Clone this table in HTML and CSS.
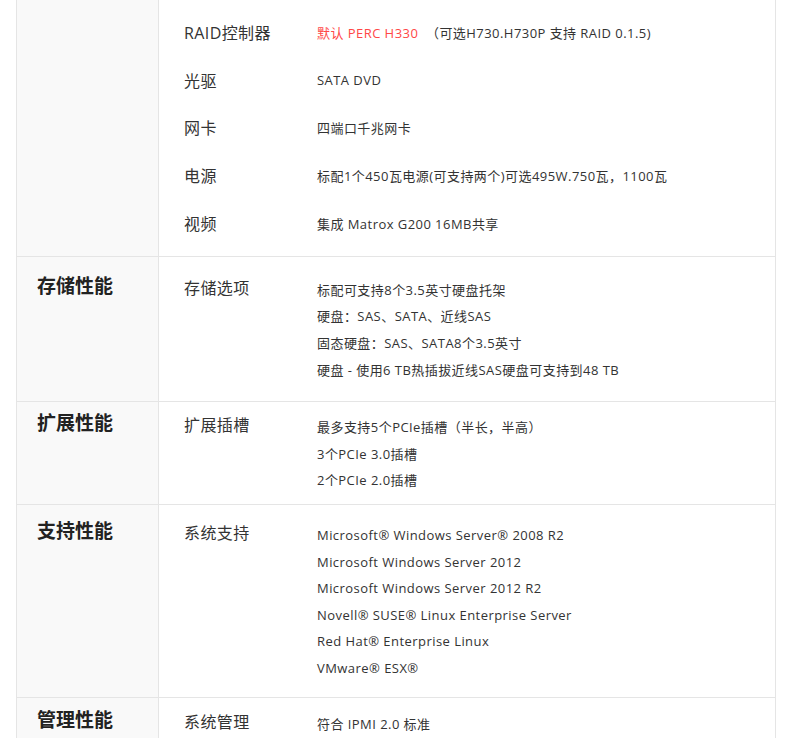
FILE: index.html
```html
<!DOCTYPE html>
<html lang="zh-CN">
<head>
  <meta charset="UTF-8">
  <meta name="viewport" content="width=device-width, initial-scale=1.0">
  <title>规格参数</title>
  <link rel="stylesheet" href="styles.css">
</head>
<body>
  <div class="spec">

    <div class="section first">
      <div class="cat"></div>
      <div class="items">
        <div class="item">
          <div class="label">RAID控制器</div>
          <div class="value"><span class="red">默认 PERC H330</span>&nbsp; （可选H730.H730P 支持 RAID 0.1.5)</div>
        </div>
        <div class="item">
          <div class="label">光驱</div>
          <div class="value">SATA DVD</div>
        </div>
        <div class="item">
          <div class="label">网卡</div>
          <div class="value">四端口千兆网卡</div>
        </div>
        <div class="item">
          <div class="label">电源</div>
          <div class="value">标配1个450瓦电源(可支持两个)可选495W.750瓦，1100瓦</div>
        </div>
        <div class="item">
          <div class="label">视频</div>
          <div class="value">集成 Matrox G200 16MB共享</div>
        </div>
      </div>
    </div>

    <div class="section storage">
      <div class="cat">存储性能</div>
      <div class="items">
        <div class="item">
          <div class="label">存储选项</div>
          <div class="value">
            <p>标配可支持8个3.5英寸硬盘托架</p>
            <p>硬盘：SAS、SATA、近线SAS</p>
            <p>固态硬盘：SAS、SATA8个3.5英寸</p>
            <p>硬盘 - 使用6 TB热插拔近线SAS硬盘可支持到48 TB</p>
          </div>
        </div>
      </div>
    </div>

    <div class="section expand">
      <div class="cat">扩展性能</div>
      <div class="items">
        <div class="item">
          <div class="label">扩展插槽</div>
          <div class="value">
            <p>最多支持5个PCIe插槽（半长，半高）</p>
            <p>3个PCIe 3.0插槽</p>
            <p>2个PCIe 2.0插槽</p>
          </div>
        </div>
      </div>
    </div>

    <div class="section os">
      <div class="cat">支持性能</div>
      <div class="items">
        <div class="item">
          <div class="label">系统支持</div>
          <div class="value">
            <p>Microsoft® Windows Server® 2008 R2</p>
            <p>Microsoft Windows Server 2012</p>
            <p>Microsoft Windows Server 2012 R2</p>
            <p>Novell® SUSE® Linux Enterprise Server</p>
            <p>Red Hat® Enterprise Linux</p>
            <p>VMware® ESX®</p>
          </div>
        </div>
      </div>
    </div>

    <div class="section mgmt">
      <div class="cat">管理性能</div>
      <div class="items">
        <div class="item">
          <div class="label">系统管理</div>
          <div class="value">
            <p>符合 IPMI 2.0 标准</p>
          </div>
        </div>
      </div>
    </div>

  </div>
</body>
</html>
```

FILE: styles.css
```css
body {
  font-family: "Open Sans", "Noto Sans CJK SC", sans-serif;
  margin: 0;
  background: #fff;
  color: #333;
}
.spec {
  width: 760px;
  margin: 0 0 0 16px;
  border-left: 1px solid #e5e5e5;
  border-right: 1px solid #e5e5e5;
  box-sizing: border-box;
}
.section {
  --pad: 12px;
  --pad-bottom: var(--pad);
  display: grid;
  grid-template-columns: 142px 1fr;
  border-bottom: 1px solid #e5e5e5;
}
.storage { --pad: 19px; --pad-bottom: 18px; }
.expand { --pad: 11px; --pad-bottom: 10px; }
.os { --pad: 16px; }
.mgmt { --pad: 12px; }

.cat {
  background: #f9f9f9;
  border-right: 1px solid #e5e5e5;
  padding: calc(var(--pad) - 2px) 20px 0;
  font-size: 19px;
  font-weight: bold;
  line-height: 24px;
  color: #222;
}
.items {
  padding: var(--pad) 0 var(--pad-bottom) 25px;
}
.item {
  display: flex;
  align-items: flex-start;
}
.label {
  width: 133px;
  flex-shrink: 0;
  font-size: 16px;
  line-height: 24px;
  letter-spacing: 0.4px;
}
.value {
  font-size: 13px;
  line-height: 26.6px;
  letter-spacing: 0.45px;
  padding-top: 1px;
}
.value p {
  margin: 0;
}
.red {
  color: #ff4747;
}

/* top block: rows of equal height */
.first .items {
  padding: 9px 0 8px 25px;
}
.first .item {
  height: 47.75px;
  align-items: center;
}
.first .value {
  padding-top: 0;
}
```
